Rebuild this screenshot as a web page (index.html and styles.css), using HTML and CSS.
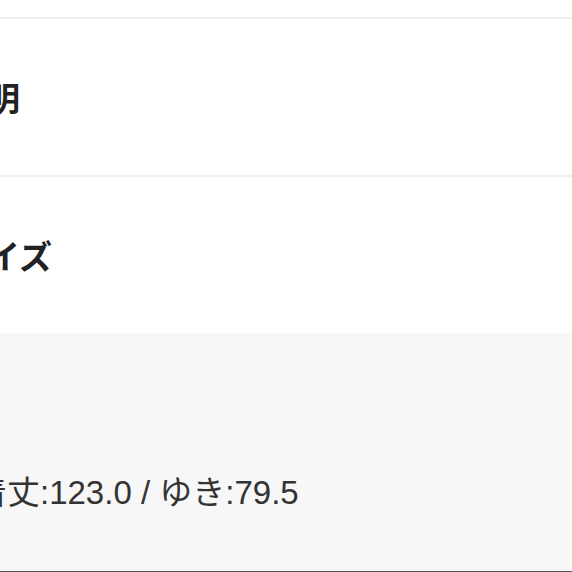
FILE: index.html
```html
<!DOCTYPE html>
<html lang="ja">
<head>
  <meta charset="UTF-8">
  <meta name="viewport" content="width=device-width, initial-scale=1.0">
  <title>商品詳細</title>
  <link rel="stylesheet" href="styles.css">
</head>
<body>
  <div class="page">
    <div class="top-gap"></div>
    <!-- 説明 -->
    <div class="row">
      <h2 class="row-title">説明</h2>
    </div>
    <!-- サイズ -->
    <div class="row">
      <h2 class="row-title">サイズ</h2>
    </div>
    <div class="detail">
      <p class="detail-text">着丈:123.0 / ゆき:79.5</p>
    </div>
  </div>
</body>
</html>
```

FILE: styles.css
```css
body {
  margin: 0;
  background: #fff;
  font-family: "Liberation Sans", "Noto Sans CJK JP", sans-serif;
  color: #222;
  overflow: hidden;
}
.page {
  margin-left: -46px;
  width: 700px;
  height: 572px;
  display: flex;
  flex-direction: column;
}
.top-gap {
  height: 17px;
}
.row {
  border-top: 2px solid #efefef;
  height: 156px;
  display: flex;
  align-items: center;
}
.row-title {
  margin: 0;
  font-family: "Noto Sans CJK JP", sans-serif;
  font-size: 33px;
  font-weight: 700;
  line-height: 1;
}
.detail {
  flex: 1;
  background: #f7f7f7;
  border-bottom: 1px solid #555;
  padding: 143px 0 0 20px;
}
.detail-text {
  margin: 0;
  font-size: 33px;
  line-height: 1;
  color: #333;
}
```
